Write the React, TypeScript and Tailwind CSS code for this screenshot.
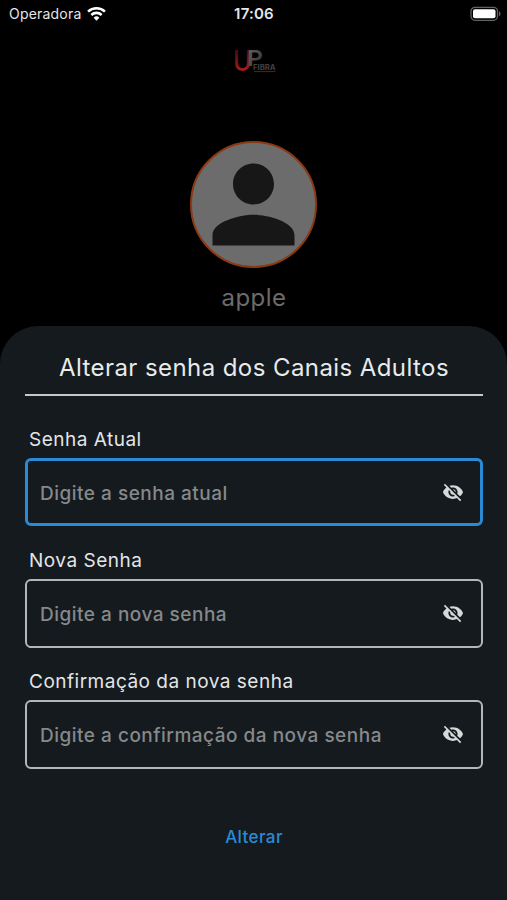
import React, { useState } from 'react';
import { MdPerson, MdVisibilityOff } from 'react-icons/md';

interface PasswordFieldProps {
  label: string;
  placeholder: string;
  focused?: boolean;
}

function StatusBar() {
  return (
    <div className="grid h-[27px] grid-cols-3 items-center pl-[9px] pr-[6px] text-[14px] text-[#e6e6e6]">
      <div className="flex items-center gap-[6px]">
        <span className="tracking-[0.2px]">Operadora</span>
        <svg viewBox="0 0 18 14" className="h-[15px] w-[19px]" fill="none" stroke="#fff" strokeWidth="2.4">
          <path d="M1 5.2a11.5 11.5 0 0 1 16 0" />
          <path d="M4.1 8.4a7 7 0 0 1 9.8 0" />
          <path d="M9 13.8 6.3 11a3.9 3.9 0 0 1 5.4 0z" fill="#fff" stroke="none" />
        </svg>
      </div>
      <span className="-ml-[2px] pt-[2px] text-center text-[15px] font-semibold tracking-[0.2px]">17:06</span>
      <svg viewBox="0 0 31 16" className="h-4 w-[31px] justify-self-end">
        <rect x="1" y="1.3" width="26.5" height="13" rx="4" fill="none" stroke="#5d665f" strokeWidth="1.3" />
        <rect x="3" y="3.3" width="22.5" height="9" rx="2" fill="#fff" />
        <path d="M29 5.3c2 .8 2 4.2 0 5z" fill="#5d665f" />
      </svg>
    </div>
  );
}

function Logo() {
  return (
    <svg viewBox="0 0 44 32" className="h-8 w-11 overflow-visible" fontFamily="Inter, sans-serif">
      <defs>
        <linearGradient id="up-red" x1="0" y1="0" x2="0" y2="1">
          <stop offset="0.25" stopColor="#4a1010" />
          <stop offset="0.8" stopColor="#b01a1a" />
        </linearGradient>
        <linearGradient id="up-gray" x1="0" y1="0" x2="1" y2="1">
          <stop offset="0.2" stopColor="#5c5c5c" />
          <stop offset="1" stopColor="#2a2a2a" />
        </linearGradient>
      </defs>
      <text x="1" y="27.2" fontSize="28" fontWeight="500" textLength="18.5" lengthAdjust="spacingAndGlyphs" fill="url(#up-red)">U</text>
      <text x="15" y="22" fontSize="22" fontWeight="600" textLength="16" lengthAdjust="spacingAndGlyphs" fill="url(#up-gray)">P</text>
      <text x="21" y="25.8" fontSize="7" fontWeight="700" textLength="22.5" lengthAdjust="spacingAndGlyphs" fill="#424242">FIBRA</text>
      <path d="M22 27.5h21.5" stroke="#6a1212" strokeWidth="1.2" />
    </svg>
  );
}

function PasswordField({ label, placeholder, focused }: PasswordFieldProps) {
  const [value, setValue] = useState('');

  return (
    <label className="block h-[121px]">
      <span className="block h-[30px] pl-1 text-[19px] leading-[24px] tracking-[0.5px] text-[#e3e5e6]">{label}</span>
      <div
        className={
          focused
            ? 'flex h-[68px] items-center rounded-[6px] border-[3px] border-[#2b8ad6] pl-3 pr-4'
            : 'flex h-[69px] items-center rounded-[6px] border-2 border-[#b4b7b9] pl-[13px] pr-[17px]'
        }
      >
        <input
          type="text"
          value={value}
          onChange={(e) => setValue(e.target.value)}
          placeholder={placeholder}
          className="min-w-0 flex-1 bg-transparent pt-1 text-[19px] font-medium tracking-[0.5px] text-white outline-none placeholder:text-[#85898b]"
        />
        <MdVisibilityOff className="mb-px size-[22px] text-[#d6d8d9]" />
      </div>
    </label>
  );
}

export default function App() {
  return (
    <div className="flex h-[900px] w-full flex-col overflow-hidden bg-black font-['Inter',sans-serif]">
      <StatusBar />
      <div className="flex h-[299px] shrink-0 flex-col items-center">
        <div className="mt-[17px]">
          <Logo />
        </div>
        <div className="mt-[65px] flex size-[127px] shrink-0 items-center justify-center rounded-full border-2 border-[#8a3a12] bg-[#6c6c6c]">
          <MdPerson className="size-[123px] shrink-0 text-[#171717]" />
        </div>
        <span className="ml-px mt-[14px] text-[24px] leading-8 tracking-[0.5px] text-[#6b6b6b]">apple</span>
      </div>
      <div className="flex-1 rounded-t-[38px] bg-[#141a1e] pl-[25px] pr-6">
        <h1 className="h-[70px] border-b-2 border-[#c6c9cb] pt-[26px] text-center text-[24px] leading-8 tracking-[0.42px] text-[#e8eaeb]">
          Alterar senha dos Canais Adultos
        </h1>
        <form className="pt-8" onSubmit={(e) => e.preventDefault()}>
          <PasswordField label="Senha Atual" placeholder="Digite a senha atual" focused />
          <PasswordField label="Nova Senha" placeholder="Digite a nova senha" />
          <PasswordField label="Confirmação da nova senha" placeholder="Digite a confirmação da nova senha" />
          <button type="submit" className="mx-auto mt-[34px] block text-[17px] leading-6 font-medium tracking-[0.4px] text-[#2b8ad6]">
            Alterar
          </button>
        </form>
      </div>
    </div>
  );
}
